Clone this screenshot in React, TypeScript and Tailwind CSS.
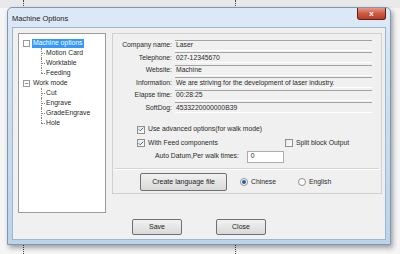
import { Check } from "lucide-react"

const FONT = { fontFamily: '"Liberation Sans", Arial, sans-serif' }

const info = [
  { label: "Company name:", value: "Laser" },
  { label: "Telephone:", value: "027-12345670" },
  { label: "Website:", value: "Machine" },
  { label: "Information:", value: "We are striving for the development of laser industry." },
  { label: "Elapse time:", value: "00:28:25" },
  { label: "SoftDog:", value: "4533220000000B39" },
]

const tree = [
  { name: "Machine options", children: ["Motion Card", "Worktable", "Feeding"], box: "" },
  { name: "Work mode", children: ["Cut", "Engrave", "GradeEngrave", "Hole"], box: "−" },
]

function CheckBox({ checked }: { checked?: boolean }) {
  return (
    <span className="w-[8px] h-[8px] border border-[#8f8f8f] bg-gradient-to-br from-[#e6e6e6] to-white flex items-center justify-center shrink-0">
      {checked && <Check size={7} strokeWidth={3.5} className="text-[#2a4e8a]" />}
    </span>
  )
}

function Radio({ checked }: { checked?: boolean }) {
  return (
    <span className="w-[8px] h-[8px] rounded-full border border-[#8f8f8f] bg-white flex items-center justify-center shrink-0">
      {checked && <span className="w-[4px] h-[4px] rounded-full bg-[#1f5fae]" />}
    </span>
  )
}

function Button({ label, className }: { label: string; className: string }) {
  return (
    <div
      className={`h-[16px] rounded-[2px] border border-[#707070] bg-gradient-to-b from-[#f2f2f2] to-[#d9d9d9] flex items-center justify-center text-[7px] text-[#222] ${className}`}
    >
      {label}
    </div>
  )
}

export default function App() {
  return (
    <div className="w-[400px] h-[254px] bg-[#f5f5f5] relative overflow-hidden" style={FONT}>
      {/* desktop behind */}
      <div className="absolute inset-x-0 top-0 h-[8px] bg-[#e9e9e9]" />
      <div className="absolute left-[23px] top-0 h-[254px] border-l border-dotted border-[#444]" />
      <div className="absolute left-[235px] top-0 h-[254px] border-l border-dotted border-[#444]" />

      {/* window */}
      <div className="relative ml-[7px] mt-[7px] w-[384px] h-[238px] rounded-t-[5px] border border-[#7d98b5] bg-gradient-to-b from-[#dde9f6] via-[#c9dcf0] to-[#bcd3ec] shadow-[2px_3px_5px_rgba(0,0,0,0.35)]">
        {/* title bar */}
        <div className="h-[19px] flex items-start pl-[4px] pr-[4px]">
          <span className="text-[7.5px] text-[#1b1b1b] mt-[5px]">Machine Options</span>
          <div className="ml-auto w-[29px] h-[12px] rounded-b-[3px] border border-[#5b2318] border-t-0 bg-gradient-to-b from-[#e39a8a] via-[#cf5a42] to-[#b93a25] flex items-center justify-center text-white text-[8px] font-bold leading-none">
            x
          </div>
        </div>

        {/* client */}
        <div className="mx-[4px] h-[213px] bg-[#f0f0f0] border border-[#9fb5cc] text-[#2a2a2a] text-[6.8px]">
          <div className="flex items-start pt-[5px] pl-[5px]">
            {/* tree */}
            <div className="w-[88px] h-[180px] bg-white border border-[#9c9c9c] pt-[4px] pl-[4px] shrink-0">
              {tree.map((group) => (
                <div key={group.name}>
                  <div className="h-[10px] flex items-center">
                    <span className="w-[7px] h-[7px] border border-[#9a9a9a] bg-white flex items-center justify-center text-[7px] leading-none text-[#333]">
                      {group.box}
                    </span>
                    <span
                      className={`ml-[2px] px-[1px] h-[9px] flex items-center ${
                        group.name === "Machine options" ? "bg-[#3399ff] text-white" : ""
                      }`}
                    >
                      {group.name}
                    </span>
                  </div>
                  {group.children.map((child, i) => (
                    <div key={child} className="h-[10px] flex items-center pl-[18px] relative">
                      <span
                        className={`absolute left-[18px] top-0 border-l border-dotted border-[#888] ${
                          i === group.children.length - 1 ? "h-[5px]" : "h-[10px]"
                        }`}
                      />
                      <span className="w-[4px] border-t border-dotted border-[#888] mr-[1px]" />
                      {child}
                    </div>
                  ))}
                </div>
              ))}
            </div>

            {/* right panel */}
            <div className="ml-[6px] w-[270px] h-[161px] border border-[#d0d0d0] flex flex-col">
              <div className="flex flex-col pt-[5px] pr-[9px]">
                {info.map((row) => (
                  <div key={row.label} className="h-[12.5px] flex items-center">
                    <span className="w-[60px] text-right pr-[1px] shrink-0">{row.label}</span>
                    <span className="ml-[2px] flex-1 h-[11px] flex items-center pl-[1px] border-t border-[#a3a3a3] border-b border-b-white whitespace-nowrap overflow-hidden">
                      {row.value}
                    </span>
                  </div>
                ))}
              </div>

              <div className="pl-[24px] mt-[9px] flex flex-col">
                <div className="h-[13px] flex items-center gap-[3px]">
                  <CheckBox checked />
                  <span>Use advanced options(for walk mode)</span>
                </div>
                <div className="h-[14px] flex items-center">
                  <CheckBox checked />
                  <span className="ml-[3px]">With Feed components</span>
                  <span className="ml-[67px]">
                    <CheckBox />
                  </span>
                  <span className="ml-[3px]">Split block Output</span>
                </div>
                <div className="h-[13px] flex items-center pl-[18px]">
                  <span>Auto Datum,Per walk times:</span>
                  <span className="ml-[8px] w-[37px] h-[12px] bg-white border border-[#abadb3] flex items-center pl-[3px]">
                    0
                  </span>
                </div>
              </div>

              <div className="mt-[5px] mx-[2px] border-t border-[#d5d5d5] border-b border-b-white" />

              <div className="flex items-center pl-[27px] mt-[3px]">
                <Button label="Create language file" className="w-[87px] h-[18px]" />
                <span className="ml-[13px]">
                  <Radio checked />
                </span>
                <span className="ml-[3px]">Chinese</span>
                <span className="ml-[22px]">
                  <Radio />
                </span>
                <span className="ml-[3px]">English</span>
              </div>
            </div>
          </div>

          {/* bottom buttons */}
          <div className="flex pl-[119px] mt-[6px]">
            <Button label="Save" className="w-[50px]" />
            <Button label="Close" className="w-[50px] ml-[34px]" />
          </div>
        </div>
      </div>
    </div>
  )
}
